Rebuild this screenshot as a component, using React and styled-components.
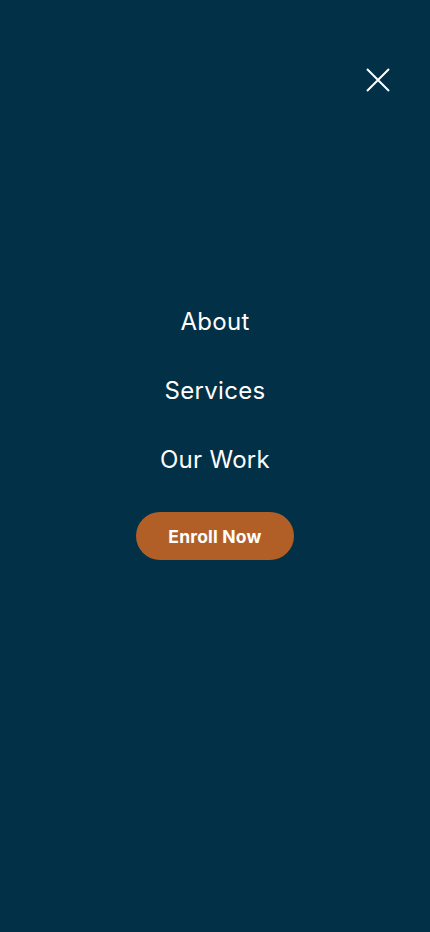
import React from "react";
import styled, { createGlobalStyle } from "styled-components";

const GlobalStyle = createGlobalStyle`
    * { box-sizing: border-box; }
    body {
        margin: 0;
        background: #023047;
        font-family: "Inter", "Open Sans", sans-serif;
    }
`;

const links = ["About", "Services", "Our Work"];

const App = () => {
    return (
        <Overlay>
            <GlobalStyle />
            <TopBar>
                <CloseButton aria-label="Close menu">
                    <svg width="24" height="24" viewBox="0 0 24 24">
                        <path
                            d="M1 1 L23 23 M23 1 L1 23"
                            stroke="#fff"
                            strokeWidth="2"
                            fill="none"
                        />
                    </svg>
                </CloseButton>
            </TopBar>
            <Menu>
                {links.map((link) => (
                    <MenuLink key={link} href="#">
                        {link}
                    </MenuLink>
                ))}
                <EnrollButton href="#">Enroll Now</EnrollButton>
            </Menu>
        </Overlay>
    );
};

const Overlay = styled.div`
    width: 430px;
    height: 932px;
    background: #023047;
    display: flex;
    flex-direction: column;
`;

const TopBar = styled.header`
    display: flex;
    justify-content: flex-end;
    padding: 59px 31px 0 0;
`;

const CloseButton = styled.button`
    width: 42px;
    height: 42px;
    display: flex;
    align-items: center;
    justify-content: center;
    background: none;
    border: none;
    padding: 0;
    cursor: pointer;
`;

const Menu = styled.nav`
    display: flex;
    flex-direction: column;
    align-items: center;
    margin-top: 206px;
    gap: 39px;
`;

const MenuLink = styled.a`
    color: #ffffff;
    text-decoration: none;
    font-size: 24px;
    line-height: 30px;
    font-weight: 400;
    letter-spacing: 0.3px;
`;

const EnrollButton = styled.a`
    display: flex;
    align-items: center;
    justify-content: center;
    width: 158px;
    height: 48px;
    border-radius: 24px;
    background: #b25f27;
    color: #ffffff;
    text-decoration: none;
    font-weight: 700;
    font-size: 17.5px;
    letter-spacing: 0.2px;
    margin-top: -2px;
`;

export default App;
